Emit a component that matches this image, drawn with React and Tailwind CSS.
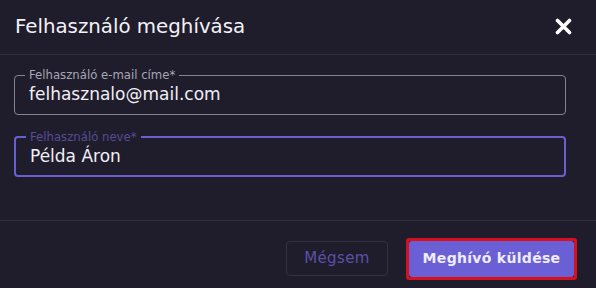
import React from "react";

function Field({ label, value, focused }) {
  return (
    <fieldset
      className={
        "h-[46px] rounded-[4px] border px-[14px] " +
        (focused ? "border-2 border-[#6b5fd0] px-[13px]" : "border-[#85838f]")
      }
    >
      <legend
        className={
          "ml-[-4px] px-[4px] text-[11.7px] leading-[12px] " +
          (focused ? "text-[#564c97]" : "text-[#a7a5b3]")
        }
      >
        {label}
      </legend>
      <div
        className={
          "text-[17px] leading-[20px] text-[#f1eff8] " + (focused ? "mt-[3px]" : "mt-[3px]")
        }
      >
        {value}
      </div>
    </fieldset>
  );
}

export default function App() {
  return (
    <div
      className="flex h-[288px] w-[596px] flex-col bg-[#1f1d2b]"
      style={{ fontFamily: '"DejaVu Sans", "Open Sans", sans-serif' }}
    >
      <div className="flex h-[55px] shrink-0 items-center justify-between border-b border-[#302e3d] pl-[15px] pr-[24px]">
        <div className="text-[19.8px] leading-[24px] text-[#f4f2f8]">Felhasználó meghívása</div>
        <svg width="17" height="17" viewBox="0 0 17 17" className="mt-[-2px]">
          <path d="M2.5 2.5 L14.5 14.5 M14.5 2.5 L2.5 14.5" stroke="#ffffff" strokeWidth="3.6" strokeLinecap="round" />
        </svg>
      </div>
      <div className="flex h-[166px] shrink-0 flex-col gap-[16px] border-b border-[#302e3d] pl-[14px] pr-[30px] pt-[14px]">
        <Field label="Felhasználó e-mail címe*" value="felhasznalo@mail.com" />
        <Field label="Felhasználó neve*" value="Példa Áron" focused />
      </div>
      <div className="flex flex-1 items-center justify-end gap-[18px] pr-[19px] pt-[8px]">
        <button className="h-[35px] w-[102px] rounded-[4px] border border-[#34313f] text-[15px] tracking-[0.4px] text-[#5a50a8]">
          Mégsem
        </button>
        <div className="rounded-[3px] border-[3px] border-[#d8101e]">
          <button className="h-[36px] w-[165px] rounded-[3px] bg-[#6b5fd6] text-[14px] font-bold tracking-[0.3px] text-[#efedfa]">
            Meghívó küldése
          </button>
        </div>
      </div>
    </div>
  );
}
